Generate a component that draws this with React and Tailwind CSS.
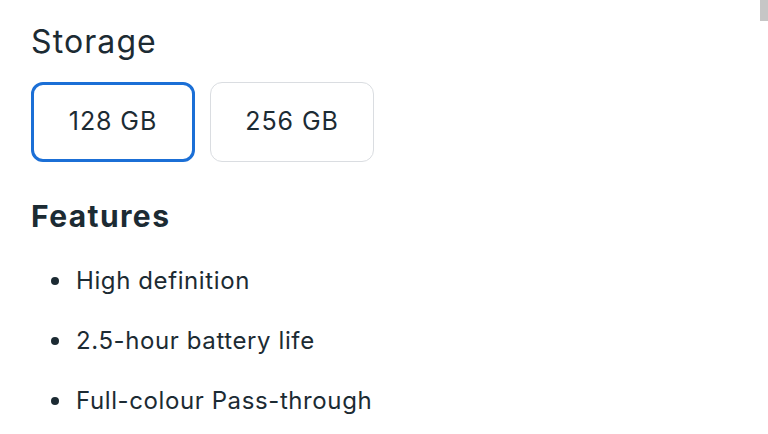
export default function App() {
  const features = ["High definition", "2.5-hour battery life", "Full-colour Pass-through"];
  return (
    <div className="relative w-[768px] h-[434px] overflow-hidden bg-white text-[#1c2b33] font-['Inter',sans-serif]">
      <div className="absolute right-0 top-0 w-[8px] h-[21px] bg-[#c6c6c6]" />
      <div className="pl-[31px] pt-[22px]">
        <h2 className="text-[32px] leading-[40px] font-normal tracking-[1.1px]">Storage</h2>
        <div className="mt-[20px] flex gap-[15px]">
          <button className="w-[164px] h-[80px] rounded-[12px] border-[3px] border-[#1b6fd6] text-[25px] tracking-[0.9px] flex items-center justify-center">
            128 GB
          </button>
          <button className="w-[164px] h-[80px] rounded-[12px] border border-[#dadde1] text-[25px] tracking-[0.9px] flex items-center justify-center">
            256 GB
          </button>
        </div>
        <h3 className="mt-[36px] text-[30px] leading-[36px] font-bold tracking-[1.4px]">Features</h3>
        <ul className="mt-[17px]">
          {features.map((f) => (
            <li key={f} className="flex items-center h-[60px] text-[24px] tracking-[0.6px]">
              <span className="ml-[20px] w-[8px] h-[8px] rounded-full bg-[#1c2b33]" />
              <span className="ml-[17px]">{f}</span>
            </li>
          ))}
        </ul>
      </div>
    </div>
  );
}
